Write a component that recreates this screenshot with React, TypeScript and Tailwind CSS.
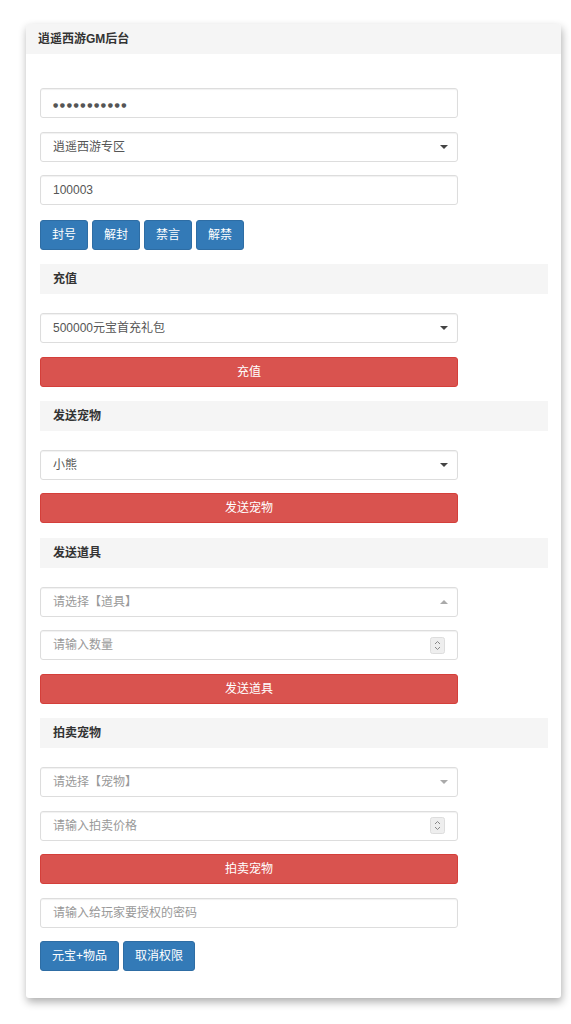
const font = { fontFamily: '"Liberation Sans", "Noto Sans CJK SC", sans-serif' };

function Caret({ up = false, light = false }: { up?: boolean; light?: boolean }) {
  return (
    <span
      className={
        'ml-auto mr-[9px] h-0 w-0 border-l-[4px] border-r-[4px] border-l-transparent border-r-transparent ' +
        (up
          ? light
            ? 'border-b-[4px] border-b-[#aaa]'
            : 'border-b-[4px] border-b-[#444]'
          : light
            ? 'border-t-[4px] border-t-[#aaa]'
            : 'border-t-[4px] border-t-[#444]')
      }
    />
  );
}

function Spinner() {
  return (
    <svg className="ml-auto mr-[12px]" width="15" height="17" viewBox="0 0 15 17">
      <rect x="0.5" y="0.5" width="14" height="16" rx="2" fill="#eee" stroke="#ddd" />
      <path d="M5 7 L7.5 4.5 L10 7" fill="none" stroke="#888" strokeWidth="1" />
      <path d="M5 10 L7.5 12.5 L10 10" fill="none" stroke="#888" strokeWidth="1" />
    </svg>
  );
}

function Field({
  children,
  placeholder = false,
  right,
}: {
  children: React.ReactNode;
  placeholder?: boolean;
  right?: React.ReactNode;
}) {
  return (
    <div
      className={
        'flex h-[30px] w-[418px] items-center rounded-[3px] border border-[#ddd] bg-white pl-[12px] text-[12px] shadow-[inset_0_1px_1px_rgba(0,0,0,0.06)] ' +
        (placeholder ? 'text-[#999]' : 'text-[#555]')
      }
    >
      <span>{children}</span>
      {right}
    </div>
  );
}

function SectionTitle({ children }: { children: React.ReactNode }) {
  return (
    <div className="mt-[1px] mb-[5px] flex h-[30px] w-[508px] items-center bg-[#f5f5f5] px-[13px] text-[12px] font-bold text-[#333]">
      {children}
    </div>
  );
}

function RedButton({ children }: { children: React.ReactNode }) {
  return (
    <button className="flex h-[30px] w-[418px] items-center justify-center rounded-[3px] border border-[#d43f3a] bg-[#d9534f] text-[12px] text-white">
      {children}
    </button>
  );
}

function BlueButton({ children }: { children: React.ReactNode }) {
  return (
    <button className="flex h-[30px] items-center rounded-[3px] border border-[#2e6da4] bg-[#337ab7] px-[11px] text-[12px] text-white">
      {children}
    </button>
  );
}

export default function App() {
  return (
    <div className="min-h-[1024px] bg-white pt-[24px] pl-[26px]" style={font}>
      <div className="w-[535px] overflow-hidden rounded-[3px] bg-white shadow-[1px_4px_9px_rgba(0,0,0,0.32)]">
        {/* Panel heading */}
        <div className="flex h-[30px] items-center bg-[#f5f5f5] px-[12px] text-[12px] font-bold text-[#333]">
          逍遥西游GM后台
        </div>

        <div className="flex flex-col gap-[13.6px] px-[14px] pt-[34px] pb-[27px]">
          <Field>
            <span className="font-['DejaVu_Sans'] text-[6px] leading-none tracking-[1.6px] text-[#555]">
              ●●●●●●●●●●●
            </span>
          </Field>
          <Field right={<Caret />}>逍遥西游专区</Field>
          <Field>100003</Field>
          <div className="mt-[1px] flex gap-[4px]">
            <BlueButton>封号</BlueButton>
            <BlueButton>解封</BlueButton>
            <BlueButton>禁言</BlueButton>
            <BlueButton>解禁</BlueButton>
          </div>

          <SectionTitle>充值</SectionTitle>
          <Field right={<Caret />}>500000元宝首充礼包</Field>
          <RedButton>充值</RedButton>

          <SectionTitle>发送宠物</SectionTitle>
          <Field right={<Caret />}>小熊</Field>
          <RedButton>发送宠物</RedButton>

          <SectionTitle>发送道具</SectionTitle>
          <Field placeholder right={<Caret up light />}>
            请选择【道具】
          </Field>
          <Field placeholder right={<Spinner />}>
            请输入数量
          </Field>
          <RedButton>发送道具</RedButton>

          <SectionTitle>拍卖宠物</SectionTitle>
          <Field placeholder right={<Caret light />}>
            请选择【宠物】
          </Field>
          <Field placeholder right={<Spinner />}>
            请输入拍卖价格
          </Field>
          <RedButton>拍卖宠物</RedButton>
          <Field placeholder>请输入给玩家要授权的密码</Field>
          <div className="flex gap-[4px]">
            <BlueButton>元宝+物品</BlueButton>
            <BlueButton>取消权限</BlueButton>
          </div>
        </div>
      </div>
    </div>
  );
}
